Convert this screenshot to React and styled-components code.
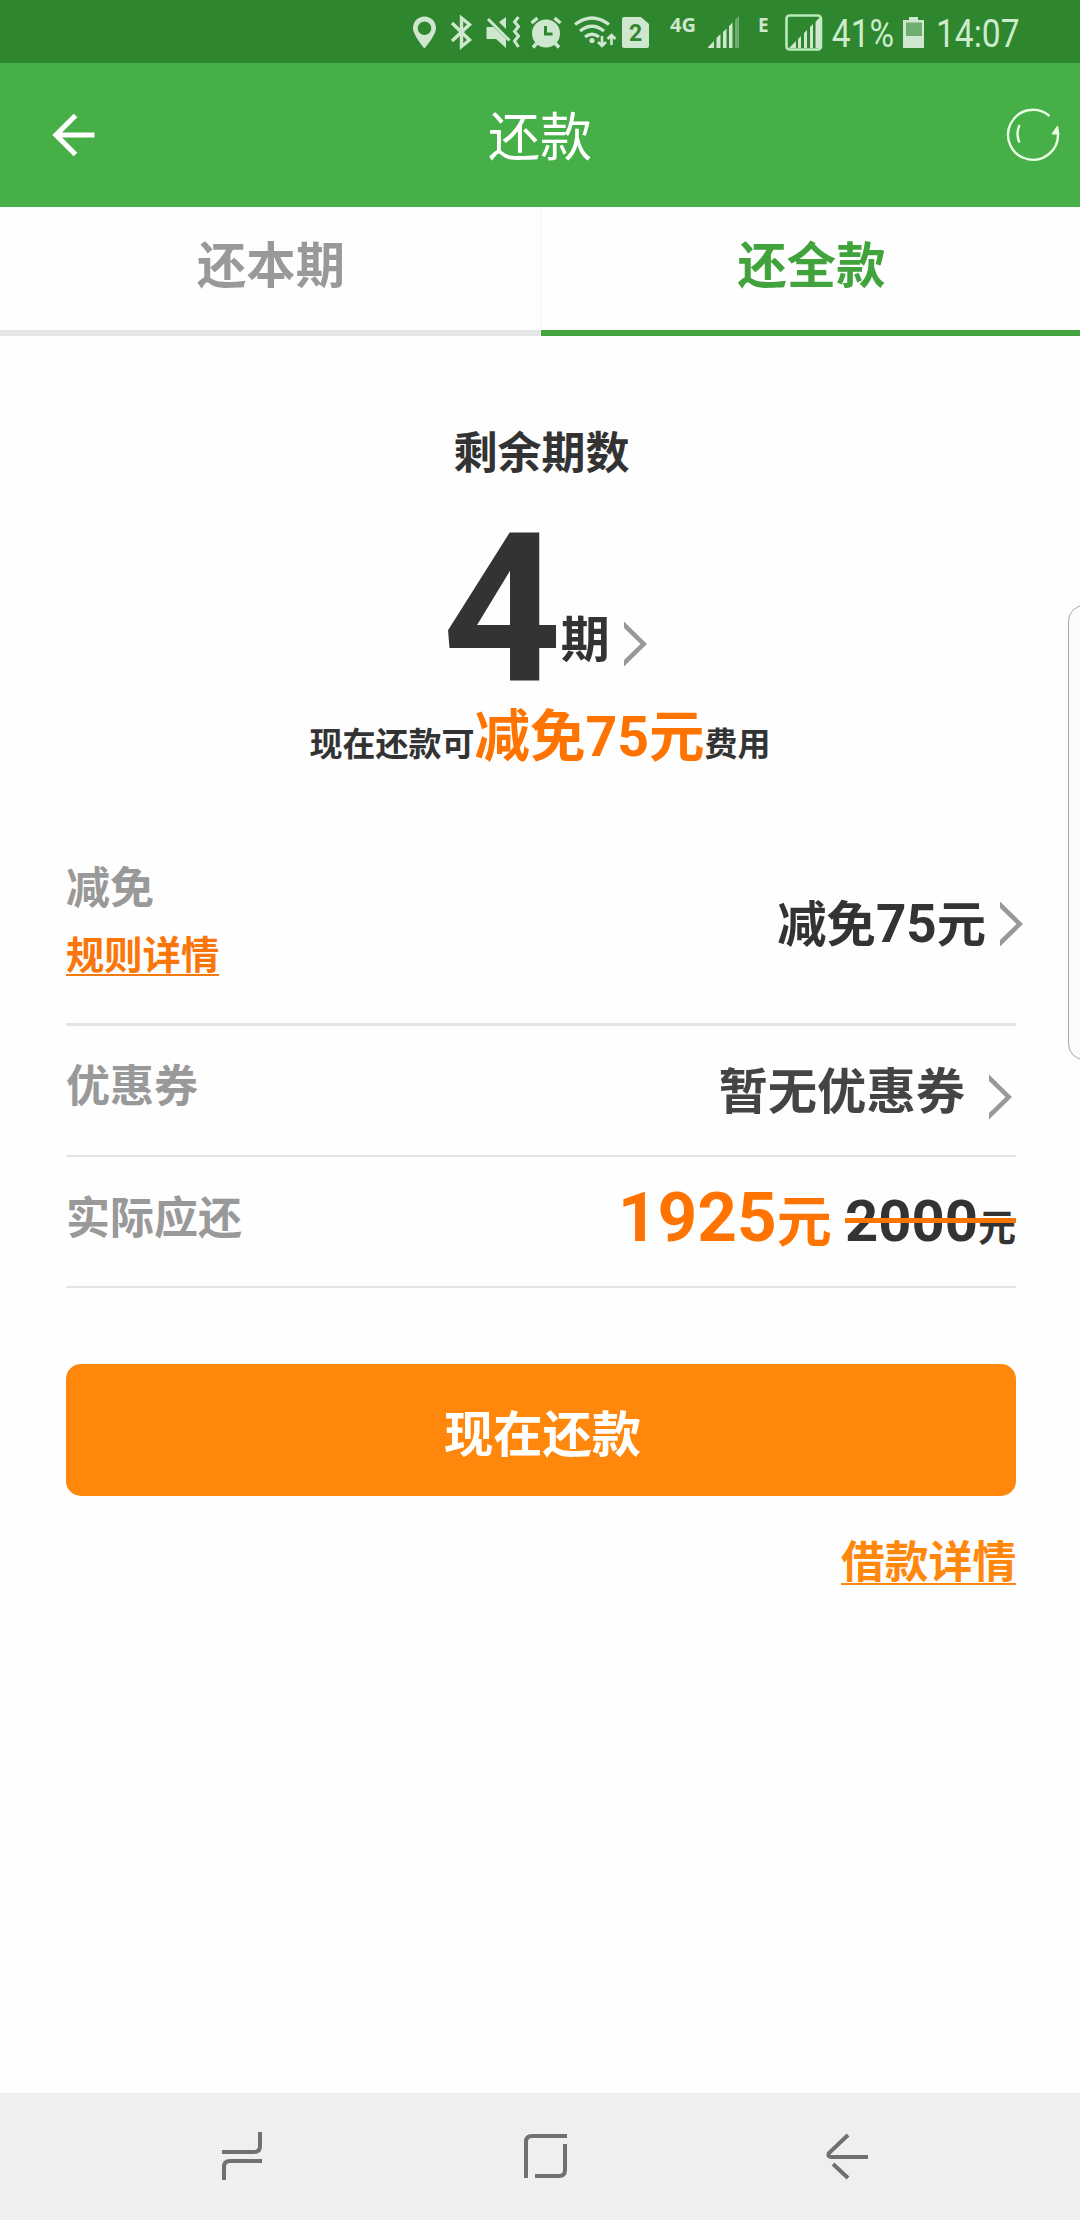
import React from "react"
import styled, { createGlobalStyle } from "styled-components"

const GlobalStyle = createGlobalStyle`
  * {
    box-sizing: border-box;
  }
  body {
    margin: 0;
    background: #fefefe;
    font-family: Roboto, 'Noto Sans CJK SC', sans-serif;
    color: #333;
  }
`

const Screen = styled.div`
  position: relative;
  display: flex;
  flex-direction: column;
  width: 1080px;
  height: 2220px;
  overflow: hidden;
  background: #fefefe;
`

const StatusBar = styled.div`
  display: flex;
  justify-content: flex-end;
  height: 63px;
  background: #2e862e;
`

const StatusIcons = styled.svg`
  display: block;
  width: 425px;
  height: 63px;
`

const StatusText = styled.span`
  width: ${(p) => p.$width}px;
  padding-left: ${(p) => p.$left || 0}px;
  line-height: 69px;
  font-size: 39px;
  white-space: nowrap;
  color: #cdeccd;
  transform: scaleX(0.86);
  transform-origin: left center;
`

const Battery = styled.svg`
  display: block;
  width: 34px;
  height: 63px;
`

const Header = styled.header`
  display: flex;
  align-items: center;
  justify-content: space-between;
  height: 144px;
  padding: 0 20px 0 52px;
  background: #47af47;
  color: #fff;
`

const HeaderSide = styled.div`
  display: flex;
  width: ${(p) => p.$width}px;
  padding-bottom: 1px;
  justify-content: ${(p) => p.$justify};
`

const Title = styled.h1`
  margin: 0;
  padding-top: 7px;
  font-size: 52px;
  line-height: 76px;
  font-weight: 400;
`

const Tabs = styled.div`
  display: flex;
  height: 129px;
`

const Tab = styled.div`
  width: 540px;
  padding: 22px 0 0 2px;
  border-left: ${(p) => (p.$active ? "1px solid #f3f3f3" : "0")};
  text-align: center;
  font-size: 49.3px;
  line-height: 74px;
  font-weight: 700;
  color: ${(p) => (p.$active ? "#41a33c" : "#999")};
  box-shadow: inset 0 -6px 0 ${(p) => (p.$active ? "#41a33c" : "#e6e6e6")};
`

const Summary = styled.section`
  display: flex;
  flex-direction: column;
  align-items: center;
  height: 494px;
  padding-top: 85px;
`

const SummaryLabel = styled.div`
  height: 66px;
  padding-left: 3px;
  font-size: 44px;
  line-height: 66px;
  font-weight: 700;
`

const Terms = styled.div`
  display: flex;
  align-items: flex-start;
  height: 208px;
  margin-top: 18px;
  padding-left: 10px;
  font-weight: 700;
`

const TermCount = styled.span`
  font-size: 208px;
  line-height: 208px;
`

const TermUnit = styled.span`
  margin: 99px 14px 0 -1px;
  font-size: 49px;
  line-height: 74px;
`

const Chevron = styled.svg`
  display: block;
  flex: none;
  width: 24px;
  height: 46px;
  margin-top: ${(p) => p.$top || 0}px;
`

const Note = styled.div`
  display: flex;
  align-items: baseline;
  font-size: 33px;
  line-height: 50px;
  font-weight: 700;
`

const Highlight = styled.span`
  font-size: 55.5px;
  color: #ff7300;
`

const Rows = styled.section`
  margin: 0 64px 0 66px;
`

const Row = styled.div`
  display: flex;
  justify-content: space-between;
  height: ${(p) => p.$height}px;
  border-bottom: ${(p) => p.$line || 2}px solid #e4e4e4;
  font-weight: 700;
`

const Label = styled.div`
  padding-top: ${(p) => p.$top}px;
  font-size: 44px;
  line-height: 66px;
  color: #999;
`

const RuleLink = styled.div`
  width: 153px;
  height: 43px;
  margin-top: 11px;
  border-bottom: 2px solid #f37a10;
  font-size: 38.3px;
  line-height: 46px;
  white-space: nowrap;
  color: #fb760a;
`

const Value = styled.div`
  display: flex;
  align-items: center;
  gap: ${(p) => p.$gap}px;
  height: 74px;
  margin: ${(p) => p.$top}px ${(p) => p.$right}px 0 0;
  font-size: 49.3px;
  line-height: 74px;
  color: ${(p) => p.$color || "#333"};
`

const Digits = styled.span`
  font-size: 53px;
`

const Amounts = styled.div`
  display: flex;
  align-items: baseline;
  height: 90px;
  margin-top: 16px;
  line-height: 90px;
`

const Amount = styled.span`
  margin-right: 13px;
  font-size: 69.3px;
  color: #ff7300;
`

const OldAmount = styled.span`
  position: relative;
  font-size: 58px;

  &::after {
    content: "";
    position: absolute;
    top: 42px;
    left: 0;
    width: 100%;
    height: 5px;
    background: #ff7300;
  }
`

const Yuan = styled.small`
  font-size: ${(p) => p.$size}px;
`

const Actions = styled.section`
  display: flex;
  flex: 1;
  flex-direction: column;
  align-items: flex-end;
  padding: 76px 64px 0 66px;
`

const PayButton = styled.button`
  width: 100%;
  height: 132px;
  padding: 1px 0 0 3px;
  border: 0;
  border-radius: 15px;
  background: #ff870c;
  font-family: inherit;
  font-size: 49.3px;
  font-weight: 700;
  color: #fff;
`

const DetailLink = styled.div`
  width: 175px;
  height: 50px;
  margin-top: 39px;
  border-bottom: 2px solid #ff870c;
  font-size: 43.8px;
  line-height: 57px;
  font-weight: 700;
  white-space: nowrap;
  color: #ff870c;
`

const NavBar = styled.nav`
  display: flex;
  align-items: center;
  justify-content: space-between;
  height: 127px;
  padding: 0 211px 2px 220px;
  background: #efefef;
`

const NavIcon = styled.svg`
  display: block;
  width: 44px;
  height: 48px;
  fill: none;
  stroke: #707070;
  stroke-width: 4;
`

// edge handle that lies over the page on the right side
const EdgePanel = styled.div`
  position: absolute;
  top: 605px;
  right: -20px;
  width: 32px;
  height: 455px;
  border: 1px solid #a9a9a9;
  border-radius: 18px;
  background: #fcfcfc;
`

const Arrow = ({ top }) => (
  <Chevron viewBox="0 0 24 46" $top={top}>
    <path d="M0 0.5V7L16.500 23L0 39V45.500L23 23Z" fill="#999" />
  </Chevron>
)

const StatusGlyphs = () => (
  <StatusIcons viewBox="405 0 425 63" fill="#cfe6cf">
    <path fillRule="evenodd" d="M423.500 16.500c-6.500 0-11.500 5-11.500 11.500c0 7.500 11.500 20.500 11.500 20.500s11.500-13 11.500-20.500c0-6.500-5-11.500-11.500-11.500zM423.500 21.500a6.800 6.800 0 1 1 0 13.600a6.800 6.800 0 1 1 0-13.600z" />
    <path d="M451 23L468.500 40L460.500 46.500V18L468.500 24.500L451 41" fill="none" stroke="#cfe6cf" strokeWidth="3.400" />
    <path d="M485.500 27h7l12.500 12v9l-10-9h-9.500zM498 22l7-5v12z" />
    <path d="M487 19L508.500 40.500" stroke="#cfe6cf" strokeWidth="3" />
    <path d="M517.500 17l-4 5l4 4.500l-4 5l4 4.500l-4 5l4 6" fill="none" stroke="#cfe6cf" strokeWidth="3" />
    <circle cx="545" cy="33.500" r="14" />
    <path d="M530.500 23l6-5M553.500 18l6 5M536 43l-4 4.500M554 43l4 4.500" stroke="#cfe6cf" strokeWidth="3.400" />
    <path d="M544.500 26v8h7" fill="none" stroke="#2e862e" strokeWidth="3" />
    <g fill="none" stroke="#cfe6cf" strokeWidth="3.200">
      <path d="M574 24.500q17-13 34 0M579 31q12-9.500 24 0M584 37q7-5.500 14 0" />
    </g>
    <circle cx="591" cy="40.500" r="2.600" />
    <path d="M601 36v10M597 42l4 4l4-4M610.500 45V35M606.500 39l4-4l4 4" fill="none" stroke="#cfe6cf" strokeWidth="2.600" />
    <path d="M623 17h17l8 7v22q0 2-2 2h-23q-2 0-2-2v-27q0-2 2-2z" />
    <text x="634.500" y="41" fontSize="23" fontWeight="700" textAnchor="middle" fill="#2e862e">2</text>
    <text x="669" y="32" fontSize="20" fontWeight="700" fontFamily="'Open Sans'" textLength="26">4G</text>
    <path d="M707 48v-1l6-6v7zM715.500 48v-10l4-4v14zM722 48V32l3.500-3.500V48zM728 48V26l3.500-3.500V48z" />
    <path d="M734 48V20l4-4v32z" opacity="0.400" />
    <text x="757" y="32" fontSize="19" fontWeight="700" fontFamily="'Open Sans'">E</text>
    <rect x="785.500" y="15.500" width="34.500" height="34" rx="3" fill="none" stroke="#b9ecb9" strokeWidth="2.600" />
    <path d="M788 48l7-7v7zM797 48V39l3-3v12zM803 48V33l3-3v18zM809 48V27l3-3v24zM814.500 48V22l4.500-5v31z" />
  </StatusIcons>
)

const App = () => {
  return (
    <Screen>
      <GlobalStyle />
      <StatusBar>
        <StatusGlyphs />
        <StatusText $width={71} $left={1}>41%</StatusText>
        <Battery viewBox="901 0 34 63" fill="#cfe6cf">
          <path d="M908 17h9v3h6v28h-21V20h6z" />
          <path d="M905 22.500h16V36h-16z" fill="#6fae6f" />
        </Battery>
        <StatusText $width={144}>14:07</StatusText>
      </StatusBar>

      <Header>
        <HeaderSide $width={52} $justify="flex-start">
          <svg width="44" height="44" viewBox="0 0 44 44" fill="none" stroke="#fff" strokeWidth="5.200">
            <path d="M23.500 2.500L4 22L23.500 41.500M4 22H42.500" />
          </svg>
        </HeaderSide>
        <Title>还款</Title>
        <HeaderSide $width={84} $justify="flex-end">
          <svg width="54" height="54" viewBox="0 0 54 54" fill="none" stroke="#e9ffe4" strokeWidth="2.400">
            <path d="M43.500 8A25 25 0 1 0 52 26" />
            <path d="M13.500 17Q9.500 26 13.500 34.500" />
            <path d="M51.500 18L46 26H53Z" fill="#e9ffe4" strokeWidth="1" />
          </svg>
        </HeaderSide>
      </Header>

      <Tabs>
        <Tab>还本期</Tab>
        <Tab $active>还全款</Tab>
      </Tabs>

      <Summary>
        <SummaryLabel>剩余期数</SummaryLabel>
        <Terms>
          <TermCount>4</TermCount>
          <TermUnit>期</TermUnit>
          <Arrow top={116} />
        </Terms>
        <Note>
          现在还款可<Highlight>减免75元</Highlight>费用
        </Note>
      </Summary>

      <Rows>
        <Row $height={196} $line={3}>
          <Label $top={26}>
            减免
            <RuleLink>规则详情</RuleLink>
          </Label>
          <Value $top={57} $right={-8} $gap={14}>
            <span>
              减免<Digits>75</Digits>元
            </span>
            <Arrow />
          </Value>
        </Row>
        <Row $height={131}>
          <Label $top={28}>优惠券</Label>
          <Value $top={29} $right={3} $gap={24} $color="#444">
            暂无优惠券
            <Arrow top={9} />
          </Value>
        </Row>
        <Row $height={131}>
          <Label $top={29}>实际应还</Label>
          <Amounts>
            <Amount>
              1925<Yuan $size={55}>元</Yuan>
            </Amount>
            <OldAmount>
              2000<Yuan $size={38}>元</Yuan>
            </OldAmount>
          </Amounts>
        </Row>
      </Rows>

      <Actions>
        <PayButton>现在还款</PayButton>
        <DetailLink>借款详情</DetailLink>
      </Actions>

      <NavBar>
        <NavIcon viewBox="0 0 44 48">
          <path d="M40 0V14Q40 20 34 20H2M4 48V35Q4 29 10 29H42" />
        </NavIcon>
        <NavIcon viewBox="0 0 44 48">
          <path d="M3 46V10Q3 4 9 4H44M42 12V38Q42 44 36 44H12" />
        </NavIcon>
        <NavIcon viewBox="0 0 44 48">
          <path d="M23 3L4 21Q2 24 6 25H43M8 32L23 46" />
        </NavIcon>
      </NavBar>

      <EdgePanel />
    </Screen>
  )
}

export default App
